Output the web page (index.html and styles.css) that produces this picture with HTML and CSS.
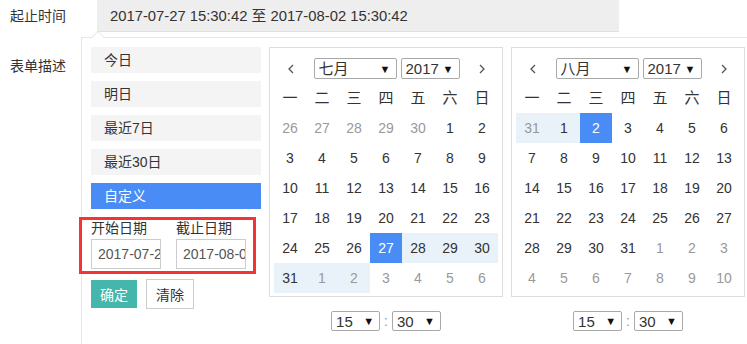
FILE: index.html
```html
<!DOCTYPE html>
<html lang="zh-CN">
<head>
    <meta charset="UTF-8">
    <meta name="viewport" content="width=device-width, initial-scale=1.0">
    <title>起止时间</title>
    <link rel="stylesheet" href="styles.css">
</head>
<body>
    <div class="form-row">
        <label class="form-label">起止时间</label>
        <div class="range-field">
            <div class="range-value">2017-07-27 15:30:42 至 2017-08-02 15:30:42</div>

            <!-- 弹出的日期选择面板 -->
            <div class="picker">
                <div class="side">
                    <ul class="shortcuts">
                        <li>今日</li>
                        <li>明日</li>
                        <li>最近7日</li>
                        <li>最近30日</li>
                        <li class="active">自定义</li>
                    </ul>
                    <div class="custom-range">
                        <div class="date-field">
                            <span>开始日期</span>
                            <input type="text" value="2017-07-27">
                        </div>
                        <div class="date-field">
                            <span>截止日期</span>
                            <input type="text" value="2017-08-02">
                        </div>
                    </div>
                    <div class="actions">
                        <button class="btn-ok">确定</button>
                        <button class="btn-clear">清除</button>
                    </div>
                </div>

                <div class="calendar-wrap">
                    <div class="calendar" id="cal-start">
                        <div class="cal-head">
                            <span class="cal-nav"><svg width="6" height="10" viewBox="0 0 6 10"><path d="M5 1L1 5l4 4" fill="none" stroke="#555" stroke-width="1.3"/></svg></span>
                            <div class="cal-selects">
                                <span class="select month"><select><option>七月</option></select></span>
                                <span class="select year"><select><option>2017</option></select></span>
                            </div>
                            <span class="cal-nav"><svg width="6" height="10" viewBox="0 0 6 10"><path d="M1 1l4 4-4 4" fill="none" stroke="#555" stroke-width="1.3"/></svg></span>
                        </div>
                        <div class="week"><span>一</span><span>二</span><span>三</span><span>四</span><span>五</span><span>六</span><span>日</span></div>
                        <div class="days"></div>
                    </div>
                    <div class="time-row">
                        <span class="select time"><select><option>15</option></select></span>
                        <span class="colon">:</span>
                        <span class="select time"><select><option>30</option></select></span>
                    </div>
                </div>

                <div class="calendar-wrap">
                    <div class="calendar" id="cal-end">
                        <div class="cal-head">
                            <span class="cal-nav"><svg width="6" height="10" viewBox="0 0 6 10"><path d="M5 1L1 5l4 4" fill="none" stroke="#555" stroke-width="1.3"/></svg></span>
                            <div class="cal-selects">
                                <span class="select month"><select><option>八月</option></select></span>
                                <span class="select year"><select><option>2017</option></select></span>
                            </div>
                            <span class="cal-nav"><svg width="6" height="10" viewBox="0 0 6 10"><path d="M1 1l4 4-4 4" fill="none" stroke="#555" stroke-width="1.3"/></svg></span>
                        </div>
                        <div class="week"><span>一</span><span>二</span><span>三</span><span>四</span><span>五</span><span>六</span><span>日</span></div>
                        <div class="days"></div>
                    </div>
                    <div class="time-row">
                        <span class="select time"><select><option>15</option></select></span>
                        <span class="colon">:</span>
                        <span class="select time"><select><option>30</option></select></span>
                    </div>
                </div>
            </div>
        </div>
    </div>

    <div class="form-row second">
        <label class="form-label">表单描述</label>
    </div>

    <script>
    // y = año, m = mes (1-12), selDay = día seleccionado
    function renderMonth(el, y, m, selDay) {
        const start = new Date(2017, 6, 27);
        const end = new Date(2017, 7, 2);
        const first = new Date(y, m - 1, 1);
        const offset = (first.getDay() + 6) % 7;
        const days = el.querySelector('.days');
        for (let i = 0; i < 42; i++) {
            const d = new Date(y, m - 1, 1 - offset + i);
            const cell = document.createElement('span');
            cell.textContent = d.getDate();
            if (d.getMonth() !== m - 1) cell.classList.add('off');
            if (d > start && d <= end) cell.classList.add('in-range');
            if (d.getMonth() === m - 1 && d.getDate() === selDay) cell.classList.add('selected');
            days.appendChild(cell);
        }
    }
    renderMonth(document.getElementById('cal-start'), 2017, 7, 27);
    renderMonth(document.getElementById('cal-end'), 2017, 8, 2);
    </script>
</body>
</html>
```

FILE: styles.css
```css
html {
    height: 100%;
    overflow: hidden;
}

body {
    margin: 0;
    height: 100%;
    font-family: "Liberation Sans", "Noto Sans CJK SC", sans-serif;
    font-size: 14px;
    color: #333;
    background: #fff;
}

.form-row {
    display: flex;
}

.form-row.second {
    margin-top: 18px;
}

.form-label {
    width: 87px;
    padding-left: 10px;
    line-height: 32px;
}

.range-field {
    position: relative;
}

.range-value {
    width: 522px;
    height: 32px;
    padding-left: 13px;
    line-height: 32px;
    font-size: 14.8px;
    background: #eee;
    border-bottom: 1px solid #e0e0e0;
    box-sizing: border-box;
}

/* Panel desplegable */
.picker {
    position: absolute;
    top: 37px;
    left: -16px;
    z-index: 2;
    width: 656px;
    height: 298px;
    display: flex;
    gap: 8px;
    padding: 9px 0 0 9px;
    background: #fff;
    border: 1px solid #e6e6e6;
    border-bottom: 0;
}

.picker::before,
.picker::after {
    content: "";
    position: absolute;
    left: 9px;
    border: 7px solid transparent;
    border-top: 0;
}

.picker::before {
    top: -7px;
    border-bottom-color: #e0e0e0;
}

.picker::after {
    top: -6px;
    border-bottom-color: #fff;
}

.side {
    width: 170px;
}

.shortcuts {
    list-style: none;
    margin: 0;
    padding: 0;
    display: flex;
    flex-direction: column;
    gap: 8px;
}

.shortcuts li {
    height: 26px;
    line-height: 26px;
    padding-left: 13px;
    background: #f4f4f4;
}

.shortcuts li.active {
    background: #4a8cf6;
    color: #fff;
}

.custom-range {
    display: flex;
    gap: 15px;
    margin: 8px 5px 0 -12px;
    padding: 0 0 2px 9px;
    border: 3px solid #f43434;
}

.date-field span {
    display: block;
    line-height: 16px;
}

.date-field input {
    display: block;
    width: 70px;
    height: 30px;
    margin-top: 3px;
    padding: 0 0 0 6px;
    box-sizing: border-box;
    border: 1px solid #ccc;
    font-family: inherit;
    font-size: 14px;
    color: #555;
}

.actions {
    display: flex;
    align-items: center;
    gap: 9px;
    margin-top: 5px;
}

.actions button {
    font-family: inherit;
    font-size: 14px;
    padding: 0;
    cursor: pointer;
}

.btn-ok {
    width: 46px;
    height: 28px;
    border: none;
    background: #44b6ab;
    color: #fff;
}

.btn-clear {
    width: 48px;
    height: 30px;
    border: 1px solid #ccc;
    background: #fff;
    color: #333;
}

/* Calendarios */
.calendar {
    width: 224px;
    height: 248px;
    padding: 0 4px;
    border: 1px solid #ddd;
}

.cal-head {
    display: flex;
    align-items: center;
    height: 21px;
    padding: 10px 9px 4px 10px;
}

.cal-nav {
    width: 14px;
    display: flex;
    justify-content: center;
}

.cal-selects {
    flex: 1;
    display: flex;
    justify-content: center;
    gap: 4px;
}

.select {
    position: relative;
    display: inline-flex;
}

.select select {
    appearance: none;
    -webkit-appearance: none;
    width: 100%;
    height: 100%;
    margin: 0;
    padding: 0 0 0 4px;
    border: 1px solid #a9a9a9;
    border-radius: 2px;
    background: #fff;
    font-family: inherit;
    font-size: 15px;
    color: #333;
}

.select::after {
    content: "▼";
    position: absolute;
    right: 6px;
    top: 50%;
    transform: translateY(-50%);
    font-size: 11px;
    color: #111;
    pointer-events: none;
}

.select.month {
    width: 83px;
    height: 21px;
}

.select.year {
    width: 59px;
    height: 21px;
}

.select.time {
    width: 49px;
    height: 20px;
}

.week,
.days {
    display: grid;
    grid-template-columns: repeat(7, 32px);
    grid-auto-rows: 30px;
}

.week span,
.days span {
    line-height: 30px;
    text-align: center;
}

.week span {
    font-size: 15px;
}

.days span.off {
    color: #999;
}

.days span.in-range {
    background: #e9f2f9;
}

.days span.selected {
    background: #4a8cf6;
    color: #fff;
}

.time-row {
    display: flex;
    justify-content: center;
    align-items: center;
    gap: 4px;
    margin-top: 14px;
}

.colon {
    color: #999;
}
```
